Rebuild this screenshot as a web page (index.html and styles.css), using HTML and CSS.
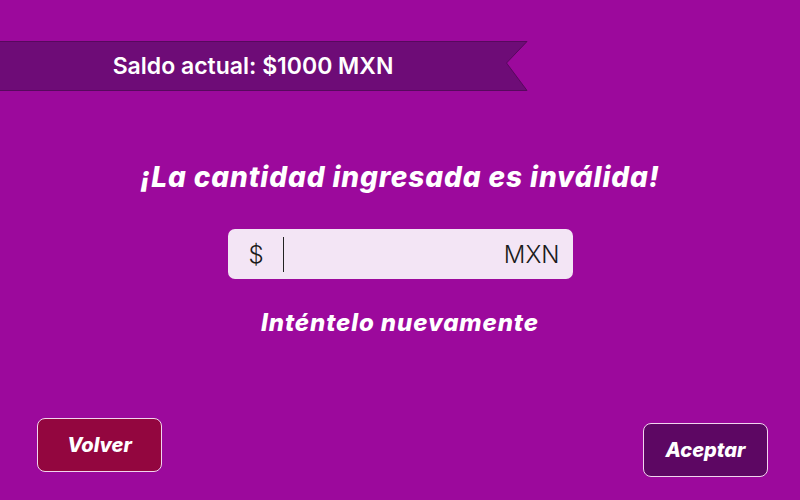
FILE: index.html
```html
<!DOCTYPE html>
<html lang="es">
<head>
<meta charset="utf-8">
<title>Cantidad inválida</title>
<link rel="stylesheet" href="styles.css">
</head>
<body>
<div class="screen">
  <div class="banner">
    <svg class="banner-shape" width="528" height="50" viewBox="0 0 528 50">
      <polygon points="-1,0.5 527,0.5 506.5,22 527,49.5 -1,49.5" fill="#6e0c77" stroke="#58085e" stroke-width="1"/>
    </svg>
    <div class="banner-text">Saldo actual: $1000 MXN</div>
  </div>

  <main class="content">
    <h1 class="title">¡La cantidad ingresada es inválida!</h1>
    <div class="amount">
      <span class="currency">$</span>
      <span class="caret"></span>
      <span class="unit">MXN</span>
    </div>
    <p class="retry">Inténtelo nuevamente</p>
  </main>

  <footer class="actions">
    <button class="btn btn-back">Volver</button>
    <button class="btn btn-ok">Aceptar</button>
  </footer>
</div>
</body>
</html>
```

FILE: styles.css
```css
* { box-sizing: border-box; }
html, body {
  margin: 0;
  padding: 0;
}
body {
  width: 800px;
  height: 500px;
  background: #9c099c;
  font-family: "Inter", "Noto Sans", sans-serif;
  color: #fff;
  overflow: hidden;
}
.screen {
  height: 500px;
  display: flex;
  flex-direction: column;
}
.banner {
  margin-top: 41px;
  width: 528px;
  height: 50px;
  display: grid;
}
.banner-shape {
  grid-area: 1 / 1;
  display: block;
}
.banner-text {
  grid-area: 1 / 1;
  width: 506px;
  display: flex;
  align-items: center;
  justify-content: center;
  font-size: 23px;
  font-weight: 600;
  color: #fff;
}
.content {
  display: flex;
  flex-direction: column;
  align-items: center;
}
.title {
  margin: 70px 0 0;
  font-size: 28px;
  line-height: 33px;
  font-weight: 800;
  font-style: italic;
  letter-spacing: 0.9px;
}
.amount {
  margin-top: 35px;
  width: 345px;
  height: 50px;
  background: #f3e5f5;
  border-radius: 7px;
  display: flex;
  align-items: center;
  padding: 0 13px 0 21px;
  color: #1a1a1a;
  font-size: 24px;
  font-weight: 300;
}
.currency {
  width: 34px;
}
.caret {
  width: 1px;
  height: 35px;
  background: #222;
}
.unit {
  margin-left: auto;
}
.retry {
  margin: 29px 0 0;
  font-size: 24px;
  line-height: 29px;
  font-weight: 800;
  font-style: italic;
  letter-spacing: 0.9px;
}
.actions {
  margin-top: auto;
  display: flex;
  justify-content: space-between;
  align-items: flex-end;
  padding: 0 32px 23px 37px;
}
.btn {
  height: 54px;
  border: 1px solid #f2d4ef;
  border-radius: 8px;
  color: #fff;
  font-family: "Inter", "Noto Sans", sans-serif;
  font-size: 20px;
  font-weight: 800;
  font-style: italic;
  cursor: pointer;
}
.btn-back {
  width: 125px;
  margin-bottom: 5px;
  background: #93063f;
}
.btn-ok {
  width: 125px;
  background: #5d0763;
}
```
